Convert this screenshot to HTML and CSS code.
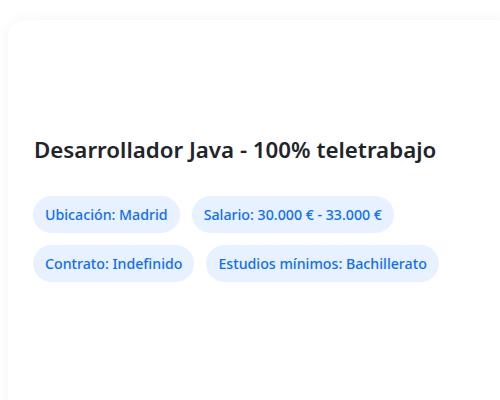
FILE: index.html
```html
<!DOCTYPE html>
<html lang="es">
<head>
<meta charset="utf-8">
<link rel="stylesheet" href="styles.css">
</head>
<body>
<div class="card">
  <h1 class="title">Desarrollador Java - 100% teletrabajo</h1>
  <div class="tags">
    <span class="tag">Ubicación: Madrid</span>
    <span class="tag">Salario: 30.000 € - 33.000 €</span>
    <span class="tag">Contrato: Indefinido</span>
    <span class="tag">Estudios mínimos: Bachillerato</span>
  </div>
</div>
</body>
</html>
```
FILE: styles.css
```css
html, body {
  margin: 0;
  background: #ffffff;
  font-family: "Noto Sans", "Open Sans", sans-serif;
  overflow: hidden;
}
body {
  padding: 20px 0 0 8px;
  height: 400px;
  box-sizing: border-box;
}
.card {
  background: #fff;
  border-radius: 16px;
  box-shadow: 0 0 14px rgba(0, 0, 0, 0.05);
  width: 520px;
  height: 420px;
  padding: 115px 0 0 25px;
  box-sizing: border-box;
}
.title {
  margin: 0 0 31px 1px;
  font-size: 22.3px;
  font-weight: 600;
  color: #212529;
  line-height: 30px;
}
.tags {
  display: flex;
  flex-wrap: wrap;
  gap: 12px 12px;
  width: 420px;
}
.tag {
  background: #e7f1ff;
  color: #0d6efd;
  font-size: 14.2px;
  line-height: 21px;
  padding: 8px 12px;
  border-radius: 19px;
  font-weight: 500;
}
```
